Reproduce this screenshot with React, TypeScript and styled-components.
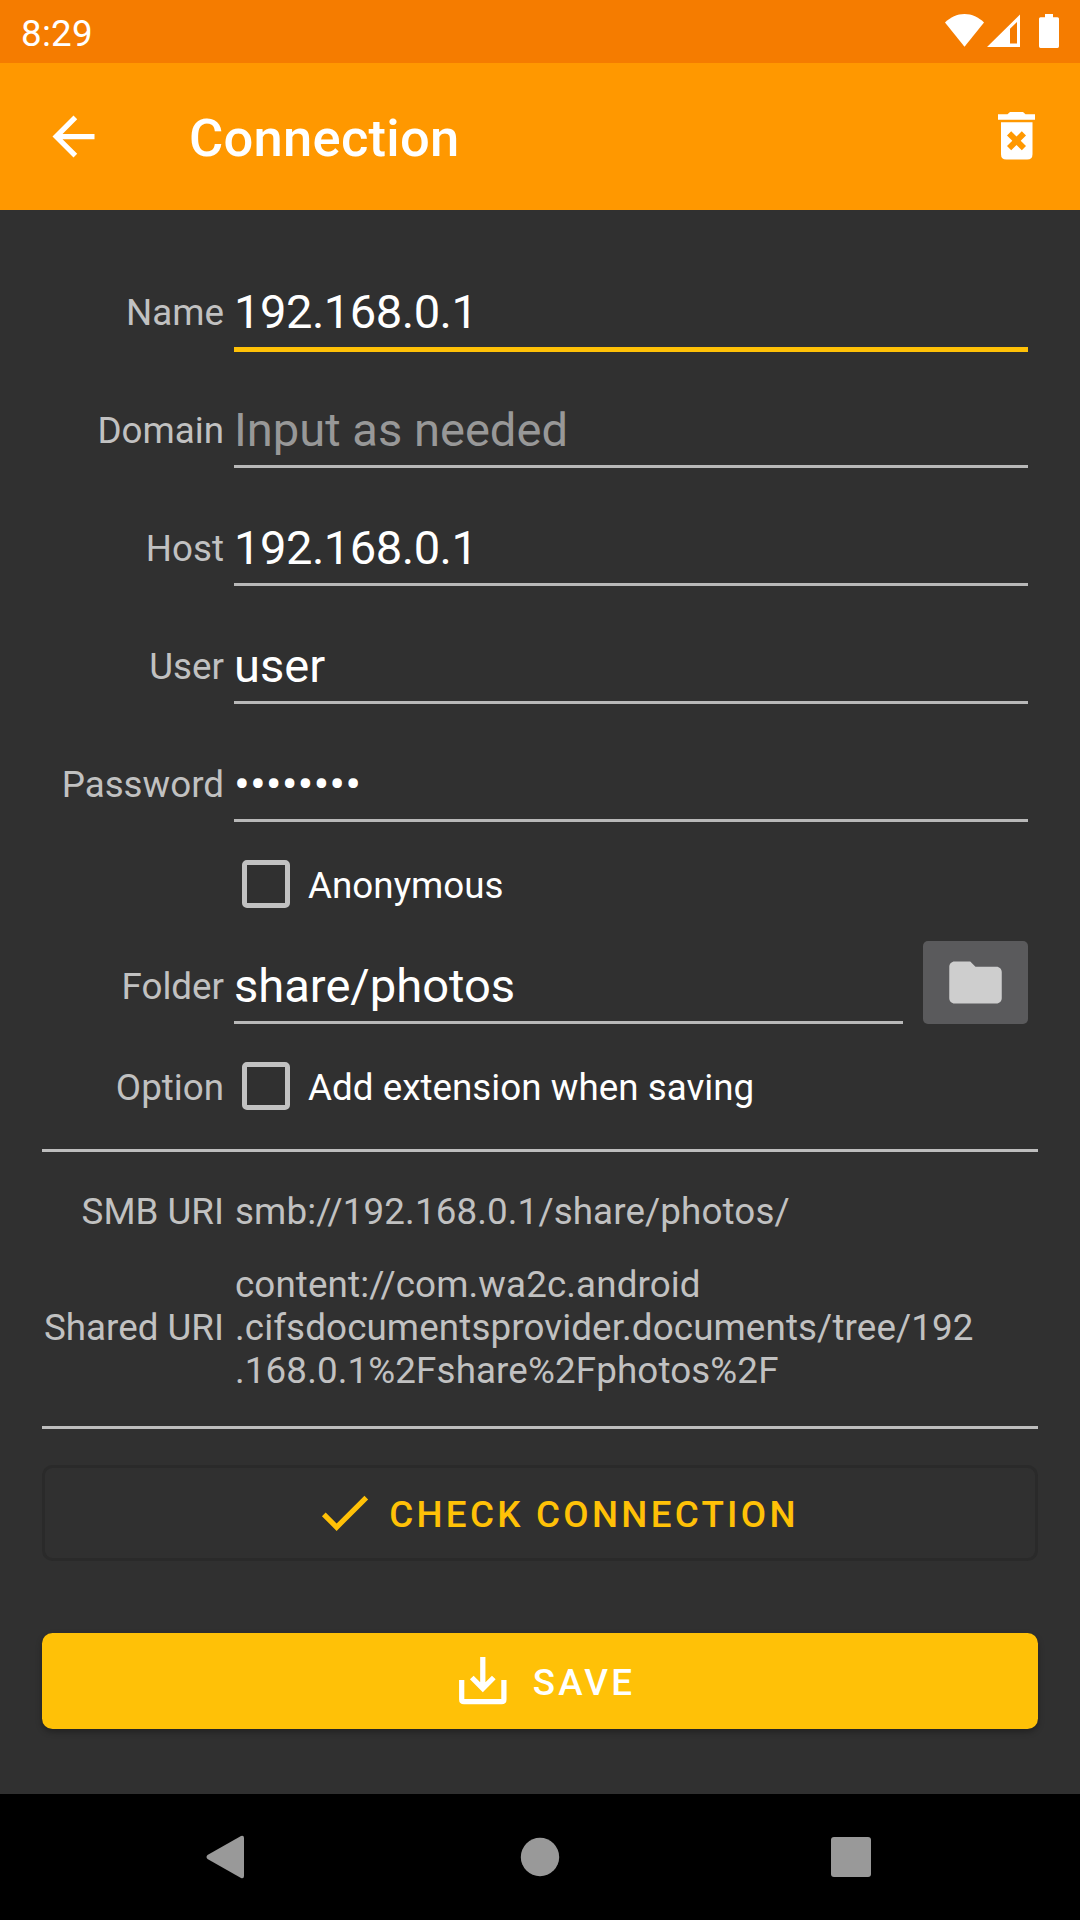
import React from "react";
import styled, { createGlobalStyle } from "styled-components";

const Global = createGlobalStyle`
  * { box-sizing: border-box; }
  body { margin: 0; background: #303030; font-family: Roboto, "Liberation Sans", sans-serif; }
`;

const Screen = styled.div`
  width: 1080px;
  height: 1920px;
  display: flex;
  flex-direction: column;
  background: #303030;
  color: #fff;
  overflow: hidden;
`;

const StatusBar = styled.header`
  height: 63px;
  flex: none;
  display: flex;
  justify-content: space-between;
  padding: 12px 21px 0;
  background: #f57c00;
  font-size: 36.75px;
  line-height: 43px;
  letter-spacing: 0.25px;
`;

const StatusIcons = styled.div`
  display: flex;
  padding-top: 2px;
`;

const AppBar = styled.div`
  height: 147px;
  flex: none;
  display: flex;
  align-items: center;
  padding: 0 32px 0 42px;
  background: #ff9800;
`;

const IconButton = styled.button`
  width: 63px;
  height: 63px;
  padding: 0;
  border: 0;
  background: none;
  svg { display: block; }
`;

const Title = styled.h1`
  flex: 1;
  margin: 0 0 0 84px;
  padding-top: 3px;
  font-size: 52.5px;
  line-height: 62px;
  font-weight: 500;
  letter-spacing: 0.25px;
`;

const Content = styled.main`
  flex: 1;
  display: flex;
  flex-direction: column;
  padding: 74px 42px 0;
`;

const Fields = styled.div`
  display: flex;
  flex-direction: column;
  gap: 50px;
`;

const Row = styled.div<{ $top?: number; $height?: number; $center?: boolean }>`
  display: grid;
  grid-template-columns: 182px 1fr;
  column-gap: 10px;
  align-items: ${(p) => (p.$center ? "center" : "start")};
  margin-top: ${(p) => p.$top ?? 0}px;
  height: ${(p) => (p.$height ? `${p.$height}px` : "auto")};
`;

const Label = styled.span<{ $top?: number }>`
  padding-top: ${(p) => p.$top ?? 0}px;
  font-size: 36.75px;
  line-height: 43px;
  text-align: right;
  white-space: nowrap;
  color: #c1c1c1;
`;

const Field = styled.div<{ $focused?: boolean; $hint?: boolean; $numeric?: boolean }>`
  height: 68px;
  flex: 1;
  margin-right: 10px;
  font-size: 47.1px;
  line-height: 55px;
  letter-spacing: ${(p) => (p.$numeric ? "-0.5px" : "0")};
  color: ${(p) => (p.$hint ? "#989898" : "#fff")};
  &::after {
    content: "";
    display: block;
    margin-top: 8px;
    height: ${(p) => (p.$focused ? 5 : 3)}px;
    background: ${(p) => (p.$focused ? "#ffc107" : "#b8b8b8")};
  }
`;

const FolderLine = styled.div`
  display: flex;
  align-items: flex-start;
  gap: 10px;
  padding-right: 10px;
  ${Field} { margin-top: 17px; }
`;

const FolderButton = styled.button`
  width: 105px;
  height: 83px;
  padding: 0;
  display: flex;
  align-items: center;
  justify-content: center;
  border: 0;
  border-radius: 5px;
  background: #5a5a5c;
`;

const Check = styled.label`
  display: flex;
  align-items: flex-start;
  gap: 18px;
  padding-left: 8px;
  font-size: 36.75px;
  line-height: 43px;
  letter-spacing: 0.03px;
  span { padding-top: 4px; }
`;

const Box = styled.i`
  width: 48px;
  height: 48px;
  border: 5.25px solid #c1c1c1;
  border-radius: 5px;
`;

const Uri = styled.div`
  padding-left: 1px;
  font-size: 36.75px;
  line-height: 43px;
  letter-spacing: 0.12px;
  color: #c1c1c1;
  white-space: pre;
`;

const Divider = styled.hr<{ $top: number }>`
  width: 100%;
  height: 3px;
  flex: none;
  margin: ${(p) => p.$top}px 0 0;
  border: 0;
  background: #bdbdbd;
`;

const Button = styled.button<{ $filled?: boolean; $top: number }>`
  height: 96px;
  flex: none;
  margin-top: ${(p) => p.$top}px;
  padding: 0 0 0 ${(p) => (p.$filled ? 6 : 32)}px;
  display: flex;
  align-items: center;
  justify-content: center;
  gap: ${(p) => (p.$filled ? 19 : 13)}px;
  border: ${(p) => (p.$filled ? "0" : "3px solid #2a2a2a")};
  border-radius: 10.5px;
  background: ${(p) => (p.$filled ? "#ffc107" : "transparent")};
  box-shadow: ${(p) => (p.$filled ? "0 3px 6px rgba(0,0,0,.3)" : "none")};
  color: ${(p) => (p.$filled ? "#fff" : "#ffc107")};
  font: 500 36.75px/43px Roboto, "Liberation Sans", sans-serif;
  letter-spacing: 3.28px;
  svg { margin-bottom: 1px; }
  span { padding-top: 2px; }
`;

const NavBar = styled.nav`
  height: 126px;
  flex: none;
  display: flex;
  align-items: center;
  justify-content: space-between;
  padding: 0 207px 0 203px;
  background: #000;
`;

type Item = { label: string; value: string; focused?: boolean; hint?: boolean; numeric?: boolean };

const items: Item[] = [
  { label: "Name", value: "192.168.0.1", focused: true, numeric: true },
  { label: "Domain", value: "Input as needed", hint: true },
  { label: "Host", value: "192.168.0.1", numeric: true },
  { label: "User", value: "user" },
  { label: "Password", value: "••••••••" },
];

export default function App() {
  return (
    <Screen>
      <Global />
      <StatusBar>
        <span>8:29</span>
        <StatusIcons>
          <svg width="114" height="34" viewBox="945 14 114 34" fill="#fff">
            <path d="M945 22.6C950.500 17 957 14 964.500 14S978.500 17 984 22.600L964.500 46.700Z" />
            <path fillRule="evenodd" d="M1020 14.500V47H987ZM1010 28.800V43.500H1017V22Z" />
            <path d="M1045 14H1053V17.200H1057.500Q1059 17.200 1059 18.700V46.300Q1059 48 1057.500 48H1040.500Q1039 48 1039 46.300V18.700Q1039 17.200 1040.500 17.200H1045Z" />
          </svg>
        </StatusIcons>
      </StatusBar>
      <AppBar>
        <IconButton aria-label="Back">
          <svg width="63" height="63" viewBox="0 0 24 24" fill="#fff">
            <path d="M20 11H7.830l5.590-5.590L12 4l-8 8 8 8 1.410-1.410L7.830 13H20v-2z" />
          </svg>
        </IconButton>
        <Title>Connection</Title>
        <IconButton aria-label="Delete">
          <svg width="63" height="63" viewBox="985 105 63 63" fill="#fff">
            <path d="M998 114.300H1007.500L1010 112H1023L1025.500 114.300H1035V119.700H998Z" />
            <path
              fillRule="evenodd"
              d="M1001 122.200H1032.500V154.200Q1032.500 159.500 1027.200 159.500H1006.300Q1001 159.500 1001 154.200ZM1011.200 131.200L1007 135.400L1012.300 140.700L1007 146L1011.200 150.200L1016.500 144.900L1021.800 150.200L1026 146L1020.700 140.700L1026 135.400L1021.800 131.200L1016.500 136.500Z"
            />
          </svg>
        </IconButton>
      </AppBar>
      <Content>
        <Fields>
          {items.map((it) => (
            <Row key={it.label}>
              <Label $top={7}>{it.label}</Label>
              <Field $focused={it.focused} $hint={it.hint} $numeric={it.numeric}>{it.value}</Field>
            </Row>
          ))}
        </Fields>
        <Row $top={36} $height={48}>
          <Label />
          <Check><Box /><span>Anonymous</span></Check>
        </Row>
        <Row $top={33} $height={85}>
          <Label $top={24}>Folder</Label>
          <FolderLine>
            <Field>share/photos</Field>
            <FolderButton aria-label="Browse">
              <svg width="63" height="63" viewBox="0 0 24 24" fill="#cecece">
                <path d="M10 4H4c-1.100 0-1.990.900-1.990 2L2 18c0 1.100.900 2 2 2h16c1.100 0 2-.900 2-2V8c0-1.100-.900-2-2-2h-8l-2-2z" />
              </svg>
            </FolderButton>
          </FolderLine>
        </Row>
        <Row $top={36} $height={48}>
          <Label $top={4}>Option</Label>
          <Check><Box /><span>Add extension when saving</span></Check>
        </Row>
        <Divider $top={39} />
        <Row $top={38}>
          <Label>SMB URI</Label>
          <Uri>smb://192.168.0.1/share/photos/</Uri>
        </Row>
        <Row $top={30} $center>
          <Label>Shared URI</Label>
          <Uri>{"content://com.wa2c.android\n.cifsdocumentsprovider.documents/tree/192\n.168.0.1%2Fshare%2Fphotos%2F"}</Uri>
        </Row>
        <Divider $top={34} />
        <Button $top={36}>
          <svg width="63" height="63" viewBox="0 0 24 24" fill="currentColor">
            <path d="M9 16.170L4.830 12l-1.420 1.410L9 19 21 7l-1.410-1.410z" />
          </svg>
          <span>CHECK CONNECTION</span>
        </Button>
        <Button $filled $top={72}>
          <svg width="63" height="63" viewBox="451 1649 63 63" fill="none" stroke="#fff" strokeWidth="5.250">
            <path d="M461.700 1680V1699.500Q461.700 1701.700 463.900 1701.700H501.700Q503.900 1701.700 503.900 1699.500V1680M482.800 1657V1688M471.800 1677.500L482.800 1688.500L493.800 1677.500" />
          </svg>
          <span>SAVE</span>
        </Button>
      </Content>
      <NavBar>
        <svg width="44" height="44" viewBox="203 1835 44 44" fill="#999">
          <path d="M207.500 1855L241 1836Q244 1835 244 1838V1876Q244 1879 241 1878L207.500 1859Q205.500 1857 207.500 1855Z" />
        </svg>
        <svg width="44" height="44" viewBox="0 0 44 44" fill="#999"><circle cx="24" cy="22" r="19.200" /></svg>
        <svg width="44" height="44" viewBox="829 1835 44 44" fill="#999">
          <rect x="831" y="1837" width="40" height="40" rx="3" />
        </svg>
      </NavBar>
    </Screen>
  );
}
